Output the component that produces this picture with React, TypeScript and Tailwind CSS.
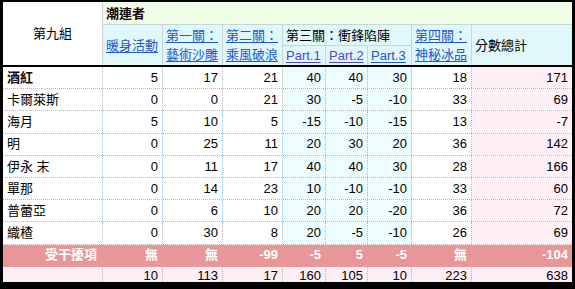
import React from 'react';

const COLS = 'grid grid-cols-[100px_60px_60px_60px_43px_42px_44px_60px_100px]';

type Row = { name: string; bold?: boolean; values: number[] };

const ROWS: Row[] = [
  { name: '酒紅', bold: true, values: [5, 17, 21, 40, 40, 30, 18, 171] },
  { name: '卡爾萊斯', values: [0, 0, 21, 30, -5, -10, 33, 69] },
  { name: '海月', values: [5, 10, 5, -15, -10, -15, 13, -7] },
  { name: '明', values: [0, 25, 11, 20, 30, 20, 36, 142] },
  { name: '伊永 末', values: [0, 11, 17, 40, 40, 30, 28, 166] },
  { name: '單那', values: [0, 14, 23, 10, -10, -10, 33, 60] },
  { name: '普蕾亞', values: [0, 6, 10, 20, 20, -20, 36, 72] },
  { name: '織楂', values: [0, 30, 8, 20, -5, -10, 26, 69] },
];

const PENALTY = ['無', '無', '-99', '-5', '5', '-5', '無', '-104'];
const TOTALS = [10, 113, 17, 160, 105, 10, 223, 638];

// background per data column (index 0..7 for value columns)
const colBg = (i: number) => {
  if (i >= 3 && i <= 5) return 'bg-[#edfdfd]';
  if (i === 7) return 'bg-[#fff0f5]';
  return 'bg-white';
};

const cell = 'h-full flex items-center border-r border-dotted border-[#94bde6]';

const Link = ({ children, visited }: { children: React.ReactNode; visited?: boolean }) => (
  <span className={`underline underline-offset-[2px] ${visited ? 'text-[#5147d1]' : 'text-[#2357d0]'}`}>{children}</span>
);

const hdr = 'flex items-center border-[#c3d6d8]';

export default function App() {
  return (
    <div
      className="w-[575px] h-[289px] bg-black pt-[2px] px-[3px] pb-[7px] overflow-hidden text-[13px] text-black"
      style={{ fontFamily: '"Liberation Sans", Arial, "Noto Sans CJK TC", sans-serif' }}
    >
      <div className="w-[569px] h-full overflow-hidden bg-white flex flex-col">
        {/* header */}
        <div className={`${COLS} grid-rows-[23px_21px_19px] leading-[19px]`}>
          <div className="row-span-3 flex items-center justify-center bg-white border-r border-[#cfcfcf]">第九組</div>
          <div className={`${hdr} col-span-8 bg-[#f0fee8] border-b pl-[3px] font-bold text-[#1a0303]`}>潮連者</div>
          <div className={`${hdr} row-span-2 bg-[#e0f8fc] border-r pl-[3px]`}>
            <Link>暖身活動</Link>
          </div>
          <div className={`${hdr} row-span-2 bg-[#e0f8fc] border-r pl-[3px]`}>
            <Link>
              第一關：
              <br />
              藝術沙雕
            </Link>
          </div>
          <div className={`${hdr} row-span-2 bg-[#e0f8fc] border-r pl-[3px]`}>
            <Link>
              第二關：
              <br />
              乘風破浪
            </Link>
          </div>
          <div className={`${hdr} col-span-3 bg-[#e0f8fc] border-r border-b pl-[3px]`}>第三關：衝鋒陷陣</div>
          <div className={`${hdr} row-span-2 bg-[#e0f8fc] border-r pl-[3px]`}>
            <Link>
              第四關：
              <br />
              神秘冰品
            </Link>
          </div>
          <div className={`${hdr} row-span-2 bg-[#e0f8fc] pl-[3px]`}>分數總計</div>
          <div className={`${hdr} bg-[#e0f8fc] border-r pl-[3px]`}>
            <Link visited>Part.1</Link>
          </div>
          <div className={`${hdr} bg-[#e0f8fc] border-r pl-[3px]`}>
            <Link visited>Part.2</Link>
          </div>
          <div className={`${hdr} bg-[#e0f8fc] border-r pl-[3px]`}>
            <Link>Part.3</Link>
          </div>
        </div>

        <div className="h-[2px] shrink-0 bg-black" />

        {/* data rows */}
        {ROWS.map(row => (
          <div key={row.name} className={`${COLS} shrink-0 h-[22.2px] border-b border-dotted border-[#94bde6]`}>
            <div className={`${cell} bg-white pl-[4px] ${row.bold ? 'font-bold text-[#1a0303]' : ''}`}>{row.name}</div>
            {row.values.map((v, i) => (
              <div
                key={i}
                className={`${cell} ${colBg(i)} justify-end pr-[4px] ${i === 7 ? 'border-r-0' : ''}`}
              >
                {v}
              </div>
            ))}
          </div>
        ))}

        <div className={`${COLS} shrink-0 h-[22.2px] border-b border-dotted border-[#94bde6] bg-[#e89697] font-bold text-white`}>
          <div className={`${cell} justify-end pr-[5px]`}>受干擾項</div>
          {PENALTY.map((v, i) => (
            <div key={i} className={`${cell} justify-end pr-[4px] ${i === 7 ? 'border-r-0' : ''}`}>
              {v}
            </div>
          ))}
        </div>

        {/* totals row: cut off by the frame at the bottom */}
        <div className={`${COLS} flex-1 min-h-0 bg-[#fdeef5] leading-[12px]`}>
          <div className="h-full border-r border-dotted border-[#94bde6]" />
          {TOTALS.map((v, i) => (
            <div
              key={i}
              className={`h-full flex items-start justify-end pt-[3px] pr-[4px] border-r border-dotted border-[#94bde6] ${i === 7 ? 'border-r-0' : ''}`}
            >
              {v}
            </div>
          ))}
        </div>
      </div>
    </div>
  );
}
